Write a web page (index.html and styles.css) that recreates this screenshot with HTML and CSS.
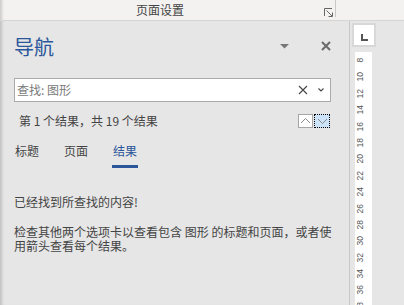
FILE: index.html
```html
<!DOCTYPE html>
<html lang="zh-CN">
<head>
<meta charset="utf-8">
<title>导航</title>
<link rel="stylesheet" href="styles.css">
</head>
<body>
<div class="topbar">
  <div class="group-label">页面设置</div>
  <span class="launcher">
    <svg width="9" height="9" viewBox="0 0 9 9"><path d="M0.5 8V0.5H8M2.5 2.5L8 8M8.5 4.5V8.5H4.5" fill="none" stroke="#666" stroke-width="1"/></svg>
  </span>
  <span class="sep"></span>
</div>
<div class="main">
  <section class="nav">
    <header class="nav-head">
      <h1 class="nav-title">导航</h1>
      <span class="spacer"></span>
      <svg class="menu-tri" width="9" height="5" viewBox="0 0 9 5"><polygon points="0,0 9,0 4.5,4.5" fill="#777"/></svg>
      <svg class="close" width="10" height="10" viewBox="0 0 10 10"><path d="M1 1L9 9M9 1L1 9" stroke="#6a6a6a" stroke-width="2"/></svg>
    </header>
    <div class="search">
      <span class="placeholder">查找: 图形</span>
      <svg class="clear" width="10" height="10" viewBox="0 0 10 10"><path d="M1 1L9 9M9 1L1 9" stroke="#444" stroke-width="1.1"/></svg>
      <svg class="drop" width="6" height="4" viewBox="0 0 6 4"><path d="M0.5 0.5L3 3L5.5 0.5" fill="none" stroke="#444" stroke-width="1.1"/></svg>
    </div>
    <div class="results">
      <span class="count">第 1 个结果，共 19 个结果</span>
      <span class="nav-btns">
        <span class="btn up"><svg width="13" height="12" viewBox="0 0 13 12"><path d="M2 8L6.5 3.5L11 8" fill="none" stroke="#8a8a8a" stroke-width="1"/></svg></span>
        <span class="btn down"><svg width="13" height="12" viewBox="0 0 13 12"><path d="M2 4L6.5 8.5L11 4" fill="none" stroke="#8a8a8a" stroke-width="1"/></svg></span>
      </span>
    </div>
    <div class="tabs">
      <span class="tab">标题</span>
      <span class="tab">页面</span>
      <span class="tab active">结果</span>
    </div>
    <p class="found">已经找到所查找的内容!</p>
    <p class="hint">检查其他两个选项卡以查看包含 图形 的标题和页面，或者使用箭头查看每个结果。</p>
  </section>
  <aside class="ruler">
    <div class="corner"><span class="l-mark"></span></div>
    <ol class="strip">
      <li>8</li><li>10</li><li>12</li><li>14</li><li>16</li><li>18</li><li>20</li><li>22</li>
      <li>24</li><li>26</li><li>28</li><li>30</li><li>32</li><li>34</li><li>36</li><li>38</li>
    </ol>
  </aside>
</div>
</body>
</html>
```
FILE: styles.css
```css
* { box-sizing: border-box; }
html, body { margin: 0; padding: 0; }
body {
  width: 404px;
  height: 305px;
  overflow: hidden;
  background: #e6e6e6;
  font-family: "Noto Sans CJK SC", "Noto Sans", sans-serif;
  color: #444;
}
.topbar {
  height: 21px;
  background: #f3f2f1;
  border-bottom: 1px solid #d6d6d6;
  display: flex;
  align-items: flex-start;
  box-shadow: inset 4px 0 3px -2px rgba(0,0,0,0.16);
}
.group-label {
  width: 320px;
  text-align: center;
  font-size: 12px;
  line-height: 20px;
  color: #444;
}
.launcher {
  margin-left: 4px;
  margin-top: 8px;
  width: 9px;
  height: 9px;
  display: flex;
}
.sep {
  margin-left: 2px;
  width: 1px;
  height: 17px;
  background: #c8c8c8;
}
.main {
  display: flex;
  height: 284px;
}
.nav {
  width: 350px;
  flex: none;
  border-right: 1px solid #c9c9c9;
  padding: 0 18px 0 14px;
  box-shadow: inset 4px 0 3px -2px rgba(0,0,0,0.16);
  display: flex;
  flex-direction: column;
}
.nav-head {
  display: flex;
  align-items: center;
  height: 28px;
  margin-top: 12px;
}
.nav-title {
  margin: 0;
  font-size: 20px;
  line-height: 28px;
  font-weight: normal;
  color: #2b579a;
}
.spacer { flex: 1; }
.menu-tri { margin-top: -2px; }
.close { margin-left: 32px; margin-top: -3px; }
.search {
  margin-top: 17px;
  height: 24px;
  background: #fff;
  border: 1px solid #ababab;
  display: flex;
  align-items: center;
  padding: 0 6px 0 2px;
}
.placeholder {
  flex: 1;
  font-size: 12px;
  line-height: 20px;
  color: #7a7a7a;
}
.clear { margin-right: 10px; }
.results {
  margin-top: 12px;
  height: 14px;
  display: flex;
  align-items: center;
  padding: 0 1px 0 5px;
}
.count {
  flex: 1;
  font-size: 12px;
  line-height: 14px;
  color: #444;
}
.nav-btns { display: flex; gap: 1px; }
.btn {
  width: 15px;
  height: 14px;
  display: flex;
  align-items: center;
  justify-content: center;
}
.btn.up { background: #fff; border: 1px solid #a6a6a6; }
.btn.down { width: 16px; background: #cde3f7; border: 1px dotted #000; }
.tabs {
  margin-top: 14px;
  display: flex;
  gap: 23px;
}
.tab {
  padding: 0 1px 5px;
  font-size: 12px;
  line-height: 18px;
  color: #444;
  border-bottom: 3px solid transparent;
}
.tab.active { color: #2b579a; border-bottom-color: #2b579a; }
.found {
  margin: 26px 0 0;
  font-size: 12px;
  line-height: 16px;
  color: #444;
}
.hint {
  margin: 15px -10px 0 0;
  font-size: 12px;
  line-height: 14px;
  color: #444;
}
.ruler {
  flex: 1;
  padding-left: 2px;
  display: flex;
  flex-direction: column;
  min-height: 0;
}
.corner {
  margin-top: 2px;
  width: 24px;
  height: 24px;
  flex: none;
  border: 2px solid #d8d8d8;
  background: #fff;
}
.l-mark {
  display: block;
  margin: 9px 0 0 7px;
  width: 7px;
  height: 7px;
  border-left: 2px solid #555;
  border-bottom: 2px solid #555;
}
.strip {
  list-style: none;
  margin: 5px 0 0 3px;
  padding: 0;
  width: 17px;
  flex: 1;
  min-height: 0;
  overflow: hidden;
  background: #fff;
}
.strip li {
  height: 16.4px;
  display: flex;
  align-items: center;
  justify-content: center;
  writing-mode: vertical-rl;
  transform: rotate(180deg);
  font-family: "Liberation Sans", Arial, sans-serif;
  font-size: 8.5px;
  color: #555;
}
```
